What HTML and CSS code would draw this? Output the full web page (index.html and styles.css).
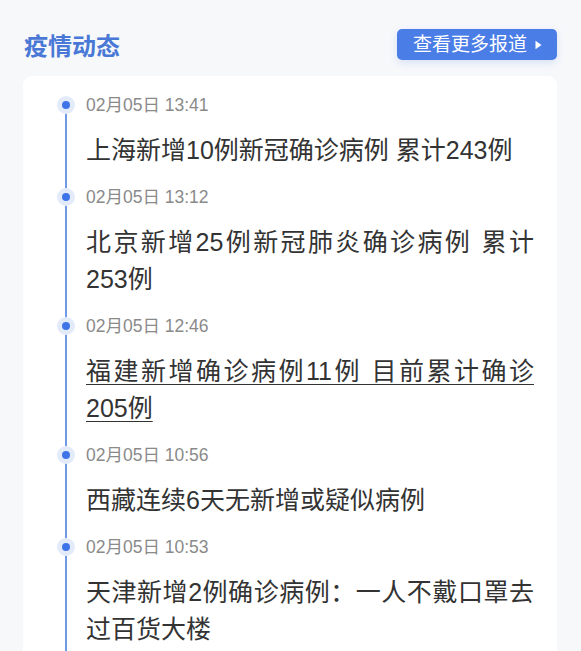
FILE: index.html
```html
<!DOCTYPE html>
<html lang="zh-CN">
<head>
<meta charset="utf-8">
<title>疫情动态</title>
<link rel="stylesheet" href="styles.css">
</head>
<body>
<div class="page">
  <header class="header">
    <h1 class="heading">疫情动态</h1>
    <a class="more-btn" href="#">查看更多报道<svg class="arrow" width="7" height="10" viewBox="0 0 7 10"><path d="M0.5 0.8 L6.5 5 L0.5 9.2 Z" fill="#fff"/></svg></a>
  </header>
  <section class="card">
    <ul class="timeline">
      <li class="item">
        <div class="date">02月05日 13:41</div>
        <div class="title">上海新增10例新冠确诊病例 累计243例</div>
      </li>
      <li class="item">
        <div class="date">02月05日 13:12</div>
        <div class="title">北京新增25例新冠肺炎确诊病例 累计253例</div>
      </li>
      <li class="item">
        <div class="date">02月05日 12:46</div>
        <div class="title title-link">福建新增确诊病例11例 目前累计确诊205例</div>
      </li>
      <li class="item">
        <div class="date">02月05日 10:56</div>
        <div class="title">西藏连续6天无新增或疑似病例</div>
      </li>
      <li class="item">
        <div class="date">02月05日 10:53</div>
        <div class="title">天津新增2例确诊病例：一人不戴口罩去过百货大楼</div>
      </li>
    </ul>
  </section>
</div>
</body>
</html>
```
FILE: styles.css
```css
html, body {
  margin: 0;
  padding: 0;
  background: #f7f8fa;
}
body {
  font-family: "Liberation Sans", "Noto Sans CJK SC", sans-serif;
  overflow: hidden;
}
.page {
  height: 651px;
  overflow: hidden;
}
.header {
  display: flex;
  justify-content: space-between;
  align-items: center;
  padding: 29px 24px 0 24px;
  height: 31px;
}
.heading {
  margin: 3px 0 0 0;
  font-size: 24px;
  font-weight: 700;
  line-height: 31px;
  color: #4a78d6;
}
.more-btn {
  display: flex;
  align-items: center;
  gap: 8px;
  height: 31px;
  box-sizing: border-box;
  padding: 0 15px 0 16px;
  background: #4a7de6;
  color: #fff;
  font-size: 19px;
  line-height: 31px;
  text-decoration: none;
  border-radius: 5px;
  box-shadow: 0 3px 8px rgba(74, 125, 230, 0.18);
}
.arrow {
  display: block;
}
.card {
  margin: 16px 24px 0 23px;
  background: #fff;
  border-radius: 9px;
  padding: 19px 23px 60px 63px;
}
.timeline {
  list-style: none;
  margin: 0;
  padding: 0;
}
.item {
  position: relative;
  padding-bottom: 18px;
}
.item::before {
  content: "";
  position: absolute;
  left: -29px;
  top: 1px;
  width: 8px;
  height: 8px;
  border-radius: 50%;
  background: #3f74e8;
  border: 5px solid #e3ebfb;
  z-index: 1;
}
.item::after {
  content: "";
  position: absolute;
  left: -21px;
  top: 10px;
  bottom: -10px;
  width: 2px;
  background: #7099e6;
}
.item:last-child::after {
  bottom: -50px;
}
.date {
  font-size: 17.5px;
  line-height: 20px;
  color: #8a8a8a;
  margin-bottom: 17px;
}
.title {
  font-size: 25px;
  line-height: 37px;
  color: #333;
  text-align: justify;
}
.title-link {
  text-decoration: underline;
  text-decoration-thickness: 1px;
  text-underline-offset: 4px;
}
```
